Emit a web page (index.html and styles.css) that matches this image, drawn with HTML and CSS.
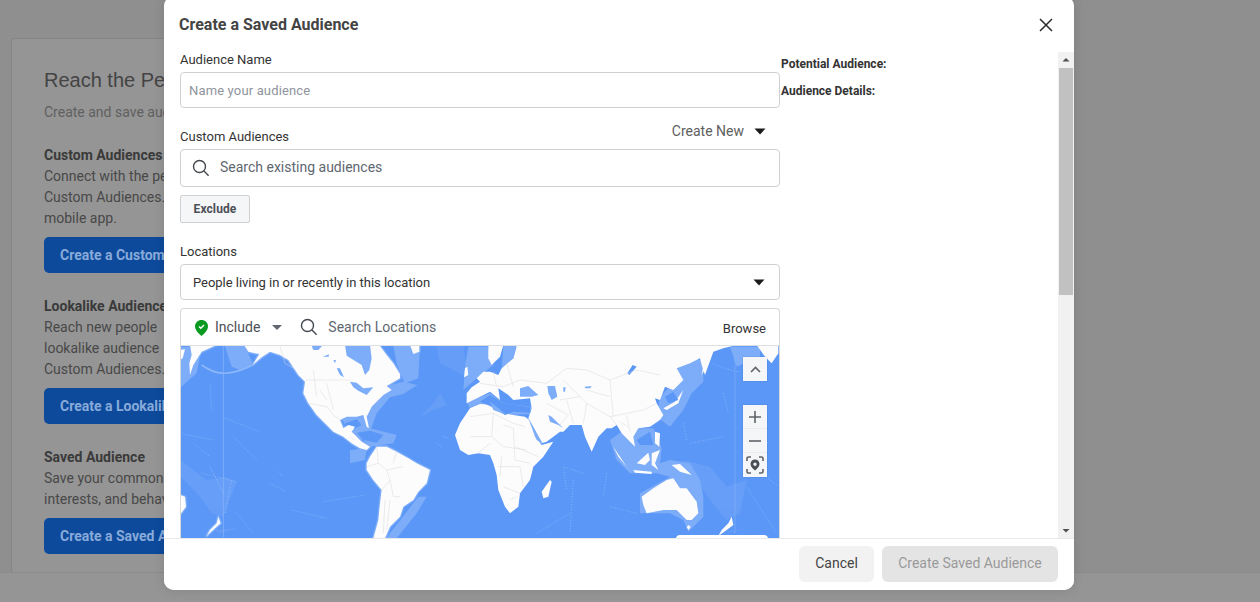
FILE: index.html
```html
<!DOCTYPE html>
<html lang="en">
<head>
<meta charset="utf-8">
<title>Create a Saved Audience</title>
<link rel="stylesheet" href="styles.css">
</head>
<body>
<main class="page">
  <section class="card">
    <h1 class="card-title">Reach the People</h1>
    <p class="card-sub">Create and save audiences</p>
    <div class="block">
      <h2 class="block-title">Custom Audiences</h2>
      <p class="block-text">Connect with the people<br>Custom Audiences.<br>mobile app.</p>
      <button class="block-btn">Create a Custom</button>
    </div>
    <div class="block">
      <h2 class="block-title">Lookalike Audience</h2>
      <p class="block-text">Reach new people<br>lookalike audience<br>Custom Audiences.</p>
      <button class="block-btn">Create a Lookalike</button>
    </div>
    <div class="block">
      <h2 class="block-title">Saved Audience</h2>
      <p class="block-text">Save your common<br>interests, and behaviours</p>
      <button class="block-btn">Create a Saved Audience</button>
    </div>
  </section>
</main>
<div class="page-foot"></div>

<div class="modal" role="dialog">
  <header class="modal-head">
    <h2 class="modal-title">Create a Saved Audience</h2>
    <button class="close" aria-label="Close">
      <svg width="14" height="14" viewBox="0 0 14 14"><path d="M1 1l12 12M13 1L1 13" class="stroke-dark"/></svg>
    </button>
  </header>
  <div class="modal-body">
    <div class="form">
      <label class="label">Audience Name</label>
      <div class="field field-name"><span class="placeholder">Name your audience</span></div>

      <div class="label-row">
        <label class="label">Custom Audiences</label>
        <span class="create-new">Create New <svg class="caret" width="12" height="7" viewBox="0 0 12 7"><path d="M0.5 0.5h11L6 6.5z"/></svg></span>
      </div>
      <div class="field field-search">
        <svg class="search" width="18" height="18" viewBox="0 0 18 18"><circle cx="7.5" cy="7.5" r="6"/><path d="M12 12l4.6 4.8"/></svg>
        <span class="placeholder-dark">Search existing audiences</span>
      </div>
      <button class="exclude">Exclude</button>

      <label class="label label-loc">Locations</label>
      <div class="field field-select">
        <span class="select-text">People living in or recently in this location</span>
        <svg class="caret" width="12" height="7" viewBox="0 0 12 7"><path d="M0.5 0.5h11L6 6.5z"/></svg>
      </div>

      <div class="loc-box">
        <div class="loc-bar">
          <svg class="pin" width="13" height="16" viewBox="0 0 13 16"><path d="M6.5 0C3 0 0 2.700 0 6.200 0 10 3.500 13.500 6.500 16 9.500 13.500 13 10 13 6.200 13 2.700 10 0 6.500 0z" fill="#0a9a1f"/><path d="M4 6.500l1.800 1.700L9 5" fill="none" stroke="#fff" stroke-width="1.400"/></svg>
          <span class="include">Include</span>
          <svg class="small-caret" width="10" height="5" viewBox="0 0 10 5"><path d="M0 0h10L5 5z"/></svg>
          <svg class="search" width="18" height="18" viewBox="0 0 18 18"><circle cx="7.500" cy="7.500" r="6"/><path d="M12 12l4.600 4.800"/></svg>
          <span class="placeholder-dark">Search Locations</span>
          <span class="browse">Browse</span>
        </div>
        <div class="map">
          <svg class="map-svg" viewBox="181 346 598 192" width="598" height="192">
            <defs>
              <g id="land-west">
                <path d="M222 135L235 155 255 160 268 162 248 195 275 172 300 155 330 165 355 180 385 225 405 245 400 280 415 310 440 345 470 375 490 395 520 410 545 430 570 445 590 450 600 440 575 425 555 405 545 395 555 380 535 375 520 385 510 360 530 350 560 350 580 345 590 380 597 385 590 350 605 320 640 285 665 270 650 258 690 235 690 222 670 190 650 165 628 135z"/>
                <path d="M720 135L748 135 748 155 730 162z"/>
                <path d="M590 490L600 470 620 440 650 440 680 455 715 475 740 490 780 510 770 550 745 575 730 600 700 620 690 650 660 680 645 715 610 715 625 660 630 610 635 570 610 540 590 510z"/>
                <path d="M60 135L140 135 95 155 70 195 60 225 58 190 65 165zM30 150L45 148 38 175 30 180z"/>
                <path d="M30 585L45 590 48 620 30 645z"/>
                <path d="M145 650L152 670 135 685 110 708 120 690 140 670z"/>
              </g>
              <g id="land-east">
                <path d="M-45 405L-30 370 0 325 30 312 70 315 100 340 130 345 165 350 178 360 195 410 215 435 250 425 220 470 190 500 180 540 150 580 145 620 120 640 105 620 85 570 80 525 70 490 60 465 25 460-5 465-30 450z"/>
                <path d="M240 540L245 545 235 590 220 595 215 575z"/>
                <path d="M-10 310L-10 280 5 262 30 245 20 235 40 215 60 215 85 225 95 205 110 190 130 175 140 135 800 135 760 145 730 155 705 225 695 195 690 175 660 190 620 205 640 240 610 270 585 260 570 300 555 295 560 310 580 345 570 360 540 380 505 385 490 410 495 440 475 420 455 400 440 375 425 385 410 385 385 410 365 455 345 410 335 375 300 375 280 395 270 395 230 425 215 430 195 390 175 355 185 325 180 295 130 300 115 285 85 265 90 300 60 275 30 290z"/>
                <path d="M55 135L100 135 90 170 65 195 55 175z"/>
                <path d="M-15 205L-8 200-5 225-18 232z"/>
                <path d="M860 135L925 135 925 160 905 190 885 170z"/>
                <path d="M695 225L705 170 730 150 720 180z"/>
                <path d="M640 270L625 310 590 330 580 325 615 305z"/>
                <path d="M515 590L550 565 590 540 610 535 630 565 650 565 680 605 685 640 665 660 650 660 620 630 580 630 530 640 520 615z"/>
                <path d="M655 675L662 680 656 690 650 682z"/>
                <path d="M605 495L630 492 665 525 630 515z"/>
                <path d="M500 490L535 458 540 480 525 495z"/>
                <path d="M430 440L470 500 482 515 445 470z"/>
                <path d="M490 510L545 515 545 522 495 518z"/>
                <path d="M545 460L570 450 555 490 565 510 545 495zM555 395L570 400 568 440 555 430z"/>
                <path d="M785 650L790 675 770 690 745 708 755 690 775 670z"/>
              </g>
            </defs>

            <rect x="181" y="346" width="598" height="192" fill="#5b97f7"/>

            <g transform="translate(170 300) scale(.33333)">
              <use href="#land-west" fill="#7dadf8" stroke="#7dadf8" stroke-width="8" stroke-linejoin="round"/>
              <g fill="#7dadf8">
                <path d="M165 138L225 138 250 195 215 212 185 200z"/>
                <path d="M30 140L95 140 80 220 45 250 30 265z"/>
                <path d="M670 138L750 138 745 235 705 250 695 230 680 190z"/>
                <path d="M650 258L700 245 742 255 700 282 660 292 620 340 602 390 590 380 600 320z"/>
                <path d="M745 590L660 700 650 715 680 715 740 640 770 590z"/>
                <path d="M515 355L590 350 600 385 680 405 670 430 600 440 580 420 540 405z"/>
                <path d="M540 450L590 445 585 480 540 490z"/>
              </g>
              <g fill="#5b97f7">
                <path d="M525 370L560 358 575 375 555 385 535 395z"/>
                <path d="M560 398L600 392 640 405 620 428 580 420z"/>
              </g>
              <g fill="#7dadf8" opacity=".35">
                <path d="M800 138L880 138 895 235 850 210 810 190z"/>
                <path d="M32 480L70 510 110 540 165 530 200 545 175 610 160 650 125 640 90 590 32 530z"/>
                <path d="M130 690L205 685 150 700z"/>
                <path d="M790 310L810 280 830 315 790 330 750 350z"/>
              </g>
              <use href="#land-west" fill="#fcfcfd"/>
              <g fill="#7dadf8">
                <path d="M525 135L530 167 575 195 585 225 598 210 605 175 600 135z"/>
                <path d="M540 245L560 248 580 265 610 262 590 285 565 272 550 262z"/>
                <path d="M500 205L510 205 522 232 510 225zM458 170L477 163 476 170zM490 180L498 180 495 190zM425 138L456 138 445 150 430 150z"/>
              </g>
              <g fill="none" stroke="#d8d8dc" stroke-width="1.500">
                <path d="M405 240H540M330 140L345 190 372 205M415 310L470 320 490 345 510 360M540 410L555 420"/>
                <path d="M430 210L440 290M470 250L490 330M450 270L470 300"/>
                <path d="M620 440L625 490 650 510 700 500M680 455L670 490M625 490L590 500M635 570L660 540 670 590 690 590M650 510L660 540M645 600L640 700M660 600L650 690"/>
              </g>
              <g fill="none" stroke="#8cb8fa">
                <path d="M160 138V712" stroke-width="2"/>
                <path d="M95 195C130 220 170 235 248 195" stroke-width="5"/>
                <path d="M165 355L270 395M120 255L125 335M190 410L260 480M300 550L350 575M460 605L585 585M365 630L470 655M200 640L250 700M30 400L130 420M70 430L120 470M95 520L200 545" stroke-width="2.500" stroke-dasharray="3 5"/>
                <path d="M120 500L160 580M185 540L165 640M325 515L340 530M820 410L835 415M800 430L815 440" stroke-width="3" stroke-dasharray="3 4"/>
              </g>
            </g>

            <g transform="translate(470 300) scale(.33333)">
              <g fill="#7dadf8">
                <path d="M-5 140L60 140 70 195 45 215 20 235-20 270-15 200z"/>
                <path d="M100 138L140 138 135 180 100 210z"/>
                <path d="M-10 305L60 280 100 310 185 320 185 342 110 345 60 315 0 325z"/>
                <path d="M600 175L700 180 700 245 665 280 640 330 600 380 560 350 570 290 620 240z"/>
                <path d="M420 420L470 385 550 385 575 445 570 490 600 480 660 490 690 540 700 590 700 650 655 695 640 660 600 640 510 640 510 580 600 530 560 520 480 520 440 480z"/>
                <path d="M780 140L870 140 870 170 800 200z"/>
                <path d="M175 355L215 432 205 430 170 365z"/>
              </g>
              <g fill="#7dadf8" opacity=".35">
                <path d="M640 480L720 500 770 560 830 540 810 640 770 660 720 600z"/>
                <path d="M750 700L850 680 790 695z"/>
              </g>
              <use href="#land-east" fill="#fcfcfd"/>
              <g fill="#5b97f7">
                <path d="M30 305L60 285 100 310 180 322 182 338 130 335 105 345 60 318z"/>
                <path d="M488 195L500 200 478 225 472 220z"/>
                <path d="M585 290L610 275 625 300 595 310z"/>
                <path d="M500 420L540 395 550 435 510 435z"/>
              </g>
              <g fill="#7dadf8">
                <path d="M150 265L175 258 205 285 185 290 150 290z"/>
                <path d="M232 258L255 258 262 290 245 300 235 280z"/>
                <path d="M235 345L245 350 280 385 265 375 240 365z"/>
                <path d="M60 305L80 320 110 345 70 330z"/>
                <path d="M345 260L365 258 360 265 345 265zM280 262L287 262 285 275 280 275z"/>
                <path d="M0 140L55 140 50 195 35 205 20 180-5 170z"/>
                <path d="M100 140L140 140 130 175 95 205z"/>
                <path d="M175 355L200 400 218 430 200 420z"/>
              </g>
              <g fill="none" stroke="#d8d8dc" stroke-width="1.500">
                <path d="M0 350L70 340 130 370 165 380M70 340L65 410 100 440 170 450M100 375L130 385 135 480 180 490M0 410L65 410M25 460L60 430M85 500L150 500 160 560M100 560L150 580M120 600L140 590M95 470L90 530M135 440L205 470"/>
                <path d="M230 250L290 205 350 210 420 240 500 210 570 225M270 300L330 290 350 310 420 350 520 330 560 310M290 300L310 370M350 310L340 370M420 350L440 375M450 365L475 380M470 345L480 395M230 310L295 345M295 345L270 375M30 250L100 260 150 240 230 250M70 215L80 260M110 190L130 260M280 240L330 290M350 270L420 290M420 240L430 350"/>
              </g>
              <g fill="none" stroke="#8cb8fa">
                <path d="M795 140V700" stroke-width="1.500"/>
                <path d="M730 190C760 205 790 215 810 215M760 280L775 340M640 370L650 420M660 430L760 410M340 520L280 500 290 570M420 620L500 640M310 540L300 700M200 700L300 640M410 520L400 590M825 400L900 430M850 500L925 560M830 560L920 700" stroke-width="2.500" stroke-dasharray="3 5"/>
              </g>
            </g>

            <path d="M676 538a4 4 0 0 1 4-3h84a4 4 0 0 1 4 3z" fill="#fff"/>
          </svg>
          <div class="map-ctl map-up">
            <svg width="11" height="7" viewBox="0 0 11 7"><path d="M1 6l4.500-4.500L10 6" class="stroke-gray"/></svg>
          </div>
          <div class="map-zoom">
            <div class="map-ctl">
              <svg width="12" height="12" viewBox="0 0 12 12"><path d="M6 0v12M0 6h12" class="stroke-gray"/></svg>
            </div>
            <div class="map-ctl">
              <svg width="12" height="2" viewBox="0 0 12 2"><path d="M0 1h12" class="stroke-gray"/></svg>
            </div>
            <div class="map-ctl">
              <svg width="18" height="18" viewBox="0 0 18 18"><path d="M1 5V2.500C1 1.600 1.600 1 2.500 1H5M13 1h2.500c.9 0 1.500.6 1.500 1.500V5M17 13v2.500c0 .9-.6 1.500-1.500 1.500H13M5 17H2.500C1.600 17 1 16.400 1 15.500V13" class="stroke-gray"/><path fill-rule="evenodd" fill="#4b4f56" d="M9 3.500c-2.500 0-4.500 2-4.500 4.500 0 2.800 2.800 5 4.500 6.500 1.700-1.500 4.500-3.700 4.500-6.500 0-2.500-2-4.500-4.500-4.500zm0 3a1.700 1.700 0 1 1 0 3.400 1.700 1.700 0 0 1 0-3.400z"/></svg>
            </div>
          </div>
        </div>
      </div>
    </div>
    <aside class="summary">
      <p class="summary-item">Potential Audience:</p>
      <p class="summary-item summary-next">Audience Details:</p>
    </aside>
    <div class="scrollbar">
      <svg class="scroll-arrow" width="16" height="16" viewBox="0 0 16 16"><path d="M4.500 9.500h7L8 6z"/></svg>
      <div class="scroll-track"><div class="scroll-thumb"></div></div>
      <svg class="scroll-arrow" width="16" height="16" viewBox="0 0 16 16"><path d="M4.500 7h7L8 10.500z"/></svg>
    </div>
  </div>
  <footer class="modal-foot">
    <button class="btn btn-cancel">Cancel</button>
    <button class="btn btn-save">Create Saved Audience</button>
  </footer>
</div>
</body>
</html>
```
FILE: styles.css
```css
* { box-sizing: border-box; }
html, body { margin: 0; height: 602px; overflow: hidden; }
body {
  background: #8f8f8f;
  font-family: Roboto, "Liberation Sans", sans-serif;
  color: #3f3f3f;
  position: relative;
}
p, h1, h2 { margin: 0; }
button { font-family: inherit; cursor: pointer; }

.page { height: 572px; padding: 38px 0 0 11px; overflow: hidden; }
.card {
  width: 153px;
  height: 534px;
  padding: 28px 0 0 32px;
  background: #959595;
  border: 1px solid #858585;
  border-width: 1px 0 0 1px;
  border-radius: 4px 0 0 0;
  overflow: hidden;
  white-space: nowrap;
}
.card-title {
  font: 400 20px/26px "Liberation Sans", Arial, sans-serif;
  color: #444;
}
.card-sub { margin-top: 10px; font-size: 14px; line-height: 18px; color: #606060; }
.block { margin-bottom: 23px; }
.card-sub + .block { margin-top: 24px; }
.block-title { font-size: 14px; line-height: 21px; font-weight: 700; color: #3a3a3a; }
.block-text { font-size: 14px; line-height: 21px; color: #484848; }
.block-btn {
  display: block;
  margin-top: 8px;
  width: 240px;
  height: 36px;
  padding: 0 16px;
  text-align: left;
  white-space: nowrap;
  border: 0;
  border-radius: 5px;
  background: #0d4a9c;
  color: #88abda;
  font-size: 14px;
  font-weight: 700;
}
.page-foot { height: 30px; background: #959595; border-top: 1px solid #8b8b8b; }

.modal {
  position: absolute;
  left: 164px;
  top: -4px;
  width: 910px;
  height: 594px;
  background: #fff;
  border-radius: 10px;
  display: flex;
  flex-direction: column;
  overflow: hidden;
  box-shadow: 0 0 12px rgba(0, 0, 0, .12);
}
.modal-head {
  height: 56px;
  flex: none;
  display: flex;
  align-items: center;
  justify-content: space-between;
  padding: 0 21px 0 15px;
}
.modal-title { font-size: 16px; line-height: 20px; font-weight: 700; color: #444; position: relative; top: 1px; }
.close { width: 14px; height: 14px; padding: 0; border: 0; background: none; display: flex; position: relative; top: 1px; }
.stroke-dark { fill: none; stroke: #2b2b2b; stroke-width: 1.500; }
.stroke-gray { fill: none; stroke: #5f6368; stroke-width: 1.600; }

.modal-body { flex: none; height: 486px; display: flex; overflow: hidden; }
.form { flex: none; width: 616px; padding-left: 16px; }
.label { display: block; font-size: 13px; line-height: 16px; color: #333; }
.field {
  display: flex;
  align-items: center;
  width: 600px;
  background: #fff;
  border: 1px solid #ced0d4;
  border-radius: 4px;
}
.field-name { height: 36px; margin-top: 4px; padding-left: 8px; }
.placeholder { font-size: 13px; color: #90949c; letter-spacing: .15px; }
.placeholder-dark { font-size: 14px; color: #606770; }
.label-row { display: flex; justify-content: space-between; margin-top: 16px; height: 25px; padding-right: 14px; }
.label-row .label { padding-top: 5px; }
.create-new { display: flex; align-items: center; gap: 10px; height: 16px; margin-top: -1px; font-size: 14px; color: #606060; }
.caret { fill: #1c1c1c; }
.field-search { height: 38px; padding-left: 11px; gap: 10px; }
.field-search .placeholder-dark { margin-bottom: 2px; }
.search { fill: none; stroke: #444950; stroke-width: 1.400; flex: none; }
.exclude {
  display: block;
  margin-top: 8px;
  width: 70px;
  height: 28px;
  padding: 0;
  background: #f5f6f7;
  border: 1px solid #ced0d4;
  border-radius: 2px;
  font-size: 12px;
  font-weight: 700;
  color: #4b4f56;
  letter-spacing: .1px;
}
.label-loc { margin-top: 21px; }
.field-select { height: 36px; margin-top: 4px; padding: 0 14px 0 12px; justify-content: space-between; }
.select-text { font-size: 13px; color: #333; letter-spacing: -.03px; }
.loc-box {
  width: 600px;
  margin-top: 8px;
  border: 1px solid #d8d8d8;
  border-bottom: 0;
  border-radius: 4px 4px 0 0;
}
.loc-bar { height: 37px; display: flex; align-items: center; padding: 0 13px 0 14px; border-bottom: 1px solid #dddfe2; }
.pin { flex: none; margin-top: 1px; }
.include { margin-left: 7px; font-size: 14px; color: #4b4f56; }
.small-caret { margin-left: 12px; fill: #606770; flex: none; }
.loc-bar .search { margin: 0 10px 0 18px; }
.browse { margin-left: auto; margin-top: 2px; font-size: 13px; color: #333; }
.map { position: relative; height: 192px; overflow: hidden; }
.map-svg { display: block; filter: blur(.35px); }
.map-ctl {
  width: 24px;
  height: 24px;
  background: #f5f6f7;
  display: flex;
  align-items: center;
  justify-content: center;
  box-shadow: 0 0 1px rgba(0, 0, 0, .25);
}
.map-up { position: absolute; left: 562px; top: 11px; }
.map-zoom { position: absolute; left: 562px; top: 59px; }

.summary { flex: 1; padding: 4px 0 0 1px; }
.summary-item { font-size: 12px; line-height: 16px; font-weight: 700; color: #333; }
.summary-next { margin-top: 11px; }
.scrollbar { flex: none; width: 16px; display: flex; flex-direction: column; background: #f1f1f1; }
.scroll-arrow { flex: none; fill: #505050; }
.scroll-track { flex: 1; }
.scroll-thumb { width: 14px; height: 227px; margin-left: 1px; background: #c1c1c1; }

.modal-foot {
  flex: 1;
  display: flex;
  justify-content: flex-end;
  align-items: flex-start;
  gap: 8px;
  padding: 7px 16px 0 0;
  border-top: 1px solid #e9e9e9;
  background: #fff;
}
.btn { height: 36px; border: 0; border-radius: 6px; font-size: 14px; padding: 0 0 2px; }
.btn-cancel { width: 75px; background: #f2f2f2; color: #444; }
.btn-save { width: 176px; background: #e4e4e4; color: #9a9a9a; }
```
